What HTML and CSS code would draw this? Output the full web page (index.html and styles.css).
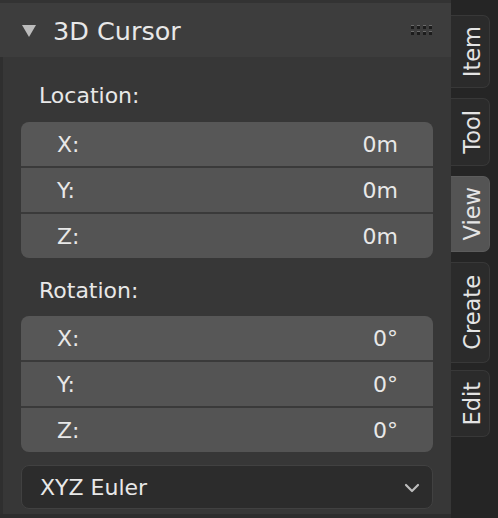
FILE: index.html
```html
<!DOCTYPE html>
<html>
<head>
<meta charset="utf-8">
<link rel="stylesheet" href="styles.css">
</head>
<body>
<div class="screen">
  <div class="panel">
    <div class="header">
      <span class="tri"></span>
      <span class="title">3D Cursor</span>
      <span class="grip">
        <i></i><i></i><i></i><i></i><i></i><i></i><i></i><i></i>
      </span>
    </div>
    <div class="content">
      <div class="label">Location:</div>
      <div class="box">
        <div class="row"><span>X:</span><span>0m</span></div>
        <div class="row"><span>Y:</span><span>0m</span></div>
        <div class="row"><span>Z:</span><span>0m</span></div>
      </div>
      <div class="label label-rot">Rotation:</div>
      <div class="box">
        <div class="row"><span>X:</span><span>0°</span></div>
        <div class="row"><span>Y:</span><span>0°</span></div>
        <div class="row"><span>Z:</span><span>0°</span></div>
      </div>
      <div class="dropdown">
        <span>XYZ Euler</span>
        <svg class="chev" width="16" height="10" viewBox="0 0 16 10"><path d="M2 2 L8 8 L14 2" fill="none" stroke="#bdbdbd" stroke-width="2.2" stroke-linecap="round" stroke-linejoin="round"/></svg>
      </div>
    </div>
  </div>
  <div class="tabs">
    <div class="tab t-item"><span>Item</span></div>
    <div class="tab t-tool"><span>Tool</span></div>
    <div class="tab active t-view"><span>View</span></div>
    <div class="tab t-create"><span>Create</span></div>
    <div class="tab t-edit"><span>Edit</span></div>
  </div>
</div>
</body>
</html>
```

FILE: styles.css
```css
html, body {
  margin: 0;
  padding: 0;
  background: #2b2b2b;
}
.screen {
  width: 498px;
  height: 518px;
  display: flex;
  font-family: "DejaVu Sans", sans-serif;
  color: #e8e8e8;
  overflow: hidden;
}
.panel {
  width: 451px;
  display: flex;
  flex-direction: column;
  background: #2d2d2d;
}
.header {
  height: 54px;
  border-top: 3px solid #333333;
  background: #3d3d3d;
  display: flex;
  align-items: center;
  padding-left: 22px;
  padding-right: 19px;
}
.tri {
  width: 0;
  height: 0;
  border-left: 7px solid transparent;
  border-right: 7px solid transparent;
  border-top: 12px solid #bcbcbc;
  margin-right: 17px;
  margin-top: 2px;
}
.title {
  font-size: 25.5px;
  flex: 1;
  margin-top: 2px;
}
.grip {
  display: grid;
  grid-template-columns: repeat(4, 3px);
  grid-template-rows: repeat(2, 3px);
  gap: 3px 3px;
}
.grip i {
  display: block;
  width: 3px;
  height: 3px;
  background: #1c1c1c;
  box-shadow: 0 -1px 0 #6a6a6a;
}
.content {
  background: #373737;
  border-left: 3px solid #2f2f2f;
  padding: 26px 18px 5px 18px;
  display: flex;
  flex-direction: column;
}
.label {
  font-size: 22px;
  line-height: 26px;
  padding-left: 18px;
  margin-bottom: 13px;
}
.label-rot {
  margin-top: 20px;
  margin-bottom: 12px;
}
.box {
  border-radius: 8px;
  overflow: hidden;
  display: flex;
  flex-direction: column;
  gap: 2px;
  background: #3a3a3a;
}
.row {
  height: 44px;
  background: #545454;
  display: flex;
  align-items: center;
  justify-content: space-between;
  padding: 0 35px 0 36px;
  font-size: 22px;
}
.row:first-child {
  background: #575757;
}
.dropdown {
  margin-top: 13px;
  height: 42px;
  border: 1px solid #414141;
  background: #2c2c2c;
  border-radius: 8px;
  display: flex;
  align-items: center;
  justify-content: space-between;
  padding: 0 12px 0 18px;
  font-size: 22px;
}
.chev {
  margin-top: 2px;
}
.tabs {
  width: 47px;
  background: #252525;
  display: flex;
  flex-direction: column;
  padding-top: 15px;
}
.tab {
  width: 39px;
  background: #2b2b2b;
  border: 1px solid #383838;
  border-left: none;
  border-radius: 0 7px 7px 0;
  display: flex;
  align-items: center;
  justify-content: center;
  padding-left: 3px;
  box-sizing: border-box;
  margin-bottom: 10px;
  font-size: 22.5px;
  color: #e4e4e4;
}
.tab span {
  writing-mode: vertical-rl;
  transform: rotate(180deg);
}
.tab.active {
  background: #545454;
  border-color: #5c5c5c;
}
.t-item { height: 73px; }
.t-tool { height: 68px; }
.t-view { height: 76px; }
.t-create { height: 101px; margin-bottom: 7px; }
.t-edit { height: 67px; }
```
